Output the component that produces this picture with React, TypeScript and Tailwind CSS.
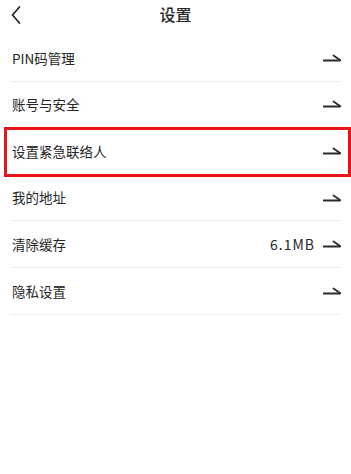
const items: { label: string; value?: string; highlight?: boolean }[] = [
  { label: 'PIN码管理' },
  { label: '账号与安全' },
  { label: '设置紧急联络人', highlight: true },
  { label: '我的地址' },
  { label: '清除缓存', value: '6.1MB' },
  { label: '隐私设置' },
]

function Harpoon() {
  return (
    <svg width="18" height="8" viewBox="0 0 18 8" fill="none">
      <path d="M0.5 6.5H17" stroke="#2b2b2b" strokeWidth="1.8" strokeLinecap="round" />
      <path d="M10.5 1.5L17 6" stroke="#2b2b2b" strokeWidth="1.8" strokeLinecap="round" />
    </svg>
  )
}

export default function App() {
  return (
    <div
      className="min-h-[474px] w-[351px] bg-white text-[#262626]"
      style={{ fontFamily: '"Noto Sans CJK SC", "Noto Sans", sans-serif' }}
    >
      <header className="relative flex h-[35px] items-center justify-center">
        <button type="button" className="absolute left-[9px] top-[4px] p-[2px]">
          <svg width="10" height="18" viewBox="0 0 10 18" fill="none">
            <path d="M8.5 1L1.5 9L8.5 17" stroke="#222" strokeWidth="1.7" strokeLinecap="round" strokeLinejoin="round" />
          </svg>
        </button>
        <h1 className="-mt-[8px] text-[16px] font-medium">设置</h1>
      </header>

      <ul className="mx-[10px]">
        {items.map((item) => (
          <li
            key={item.label}
            className="relative flex h-[46.6px] items-center justify-between border-b-[1.5px] border-[#efefef] pl-[2px]"
          >
            <span className="text-[13.5px]">{item.label}</span>
            <span className="flex items-center gap-[8px]">
              {item.value && <span className="text-[14px] tracking-[1px]">{item.value}</span>}
              <Harpoon />
            </span>
            {item.highlight && (
              <div className="pointer-events-none absolute -left-[6px] -right-[10px] -top-[1px] -bottom-[3px] border-[3px] border-[#e8131b]" />
            )}
          </li>
        ))}
      </ul>
    </div>
  )
}
